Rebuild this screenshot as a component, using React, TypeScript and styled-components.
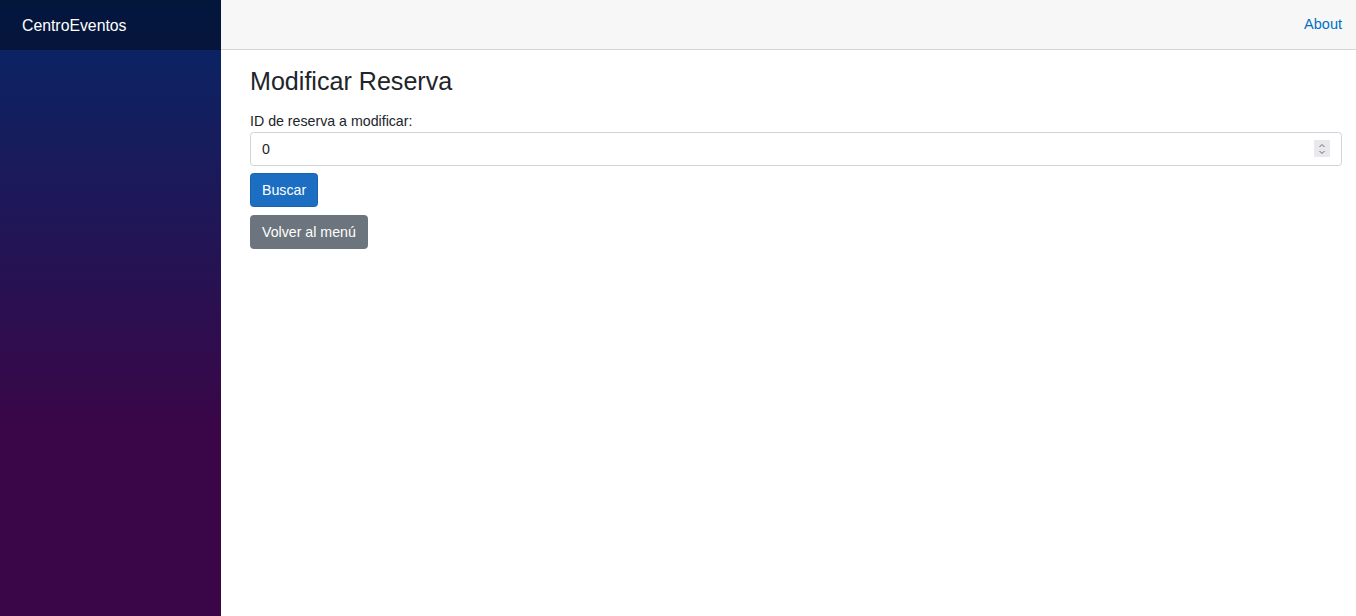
import styled, { createGlobalStyle } from "styled-components";
import React, { useState } from "react";

const GlobalStyle = createGlobalStyle`
  html, body {
    margin: 0;
    padding: 0;
  }
  body {
    font-family: "Liberation Sans", Arial, Helvetica, sans-serif;
    font-size: 14px;
    color: #212529;
    background: #fff;
  }
  * {
    box-sizing: border-box;
  }
`;

export default function App() {
  const [reservaId, setReservaId] = useState("0");

  return (
    <>
      <GlobalStyle />
      <Page>
        <Sidebar>
          <BrandRow>
            <Brand href="#">CentroEventos</Brand>
          </BrandRow>
        </Sidebar>
        <Main>
          <TopRow>
            <TopLink href="#">About</TopLink>
          </TopRow>
          <Content>
            <Title>Modificar Reserva</Title>
            <Label htmlFor="reservaId">ID de reserva a modificar:</Label>
            <InputWrap>
              <NumberInput
                id="reservaId"
                value={reservaId}
                onChange={(e) => setReservaId(e.target.value)}
              />
              <Spinner>
                <svg width="8" height="12" viewBox="0 0 8 12">
                  <path
                    d="M1.5 4 L4 1.5 L6.5 4 M1.5 8 L4 10.5 L6.5 8"
                    fill="none"
                    stroke="#6b6b6b"
                    strokeWidth="1"
                  />
                </svg>
              </Spinner>
            </InputWrap>
            <Button $variant="primary">Buscar</Button>
            <Button $variant="secondary">Volver al menú</Button>
          </Content>
        </Main>
      </Page>
    </>
  );
}

const Page = styled.div`
  display: flex;
  min-height: 100vh;
`;

const Sidebar = styled.div`
  width: 221px;
  flex-shrink: 0;
  min-height: 100vh;
  background-image: linear-gradient(180deg, rgb(5, 39, 103) 0%, #3a0647 70%);
`;

const BrandRow = styled.div`
  height: 50px;
  display: flex;
  align-items: center;
  padding-left: 22px;
  background-color: rgba(0, 0, 0, 0.4);
`;

const Brand = styled.a`
  font-size: 15.8px;
  color: #fff;
  text-decoration: none;
  margin-top: 2px;
`;

const Main = styled.div`
  flex: 1;
  display: flex;
  flex-direction: column;
`;

const TopRow = styled.div`
  height: 50px;
  display: flex;
  align-items: center;
  justify-content: flex-end;
  padding-right: 14px;
  background-color: #f7f7f7;
  border-bottom: 1px solid #d6d5d5;
`;

const TopLink = styled.a`
  font-size: 14.5px;
  color: #0071c1;
  text-decoration: none;
  margin-bottom: 2px;
`;

const Content = styled.div`
  display: flex;
  flex-direction: column;
  align-items: flex-start;
  padding: 16px 14px 0 29px;
`;

const Title = styled.h3`
  font-size: 25.1px;
  font-weight: 500;
  line-height: 30px;
  margin: 0 0 15px;
`;

const Label = styled.label`
  font-size: 14.2px;
  line-height: 21px;
  margin-bottom: 0;
`;

const InputWrap = styled.div`
  position: relative;
  width: 100%;
  margin-bottom: 7px;
`;

const NumberInput = styled.input`
  display: block;
  width: 100%;
  height: 34px;
  padding: 5px 40px 5px 11px;
  font-family: inherit;
  font-size: 14.2px;
  color: #212529;
  border: 1px solid #ced4da;
  border-radius: 3.5px;
  outline: none;
`;

const Spinner = styled.span`
  position: absolute;
  right: 12px;
  top: 8px;
  width: 16px;
  height: 17px;
  display: flex;
  align-items: center;
  justify-content: center;
  background: #e9e9ed;
`;

const Button = styled.button<{ $variant: "primary" | "secondary" }>`
  height: 34px;
  padding: 0 11px;
  margin-bottom: 8px;
  font-family: inherit;
  font-size: 14.2px;
  color: #fff;
  border-radius: 3.5px;
  border: 1px solid
    ${(p) => (p.$variant === "primary" ? "#1861ac" : "#6c757d")};
  background-color: ${(p) =>
    p.$variant === "primary" ? "#1b6ec2" : "#6c757d"};
  cursor: pointer;
`;
